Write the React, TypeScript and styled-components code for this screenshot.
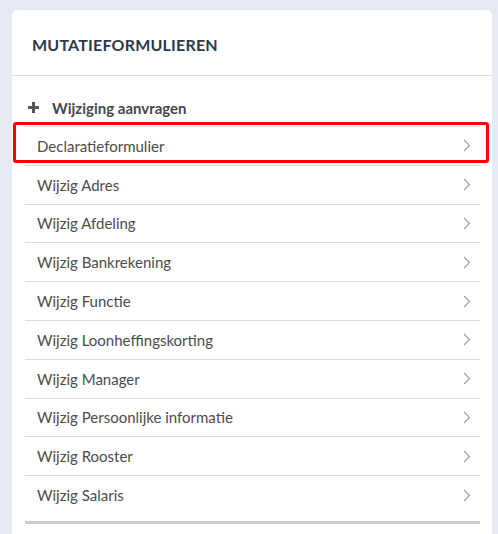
import React from "react";
import styled, { createGlobalStyle } from "styled-components";

const Global = createGlobalStyle`
  html, body { margin: 0; padding: 0; background: #e6ebf3; }
  body { font-family: "Source Sans Pro", Lato, "Noto Sans", sans-serif; }
  * { box-sizing: border-box; }
`;

const Page = styled.div`
  padding: 10px 6px 0 12px;
  height: 534px;
  overflow: hidden;
`;

const Card = styled.div`
  background: #ffffff;
  border-radius: 6px;
  height: 560px;
`;

const Header = styled.div`
  height: 66px;
  display: flex;
  align-items: center;
  padding: 3px 20px 0;
  border-bottom: 1px solid #e2e2e2;
`;

const Title = styled.h2`
  margin: 0;
  font-size: 16px;
  font-weight: 700;
  color: #2b3a4a;
  letter-spacing: 0.2px;
`;

const Body = styled.div`
  padding: 0 12px 0 13px;
`;

const Action = styled.div`
  height: 50px;
  display: flex;
  align-items: center;
  gap: 13px;
  padding: 13px 0 0 3px;
  font-size: 15px;
  font-weight: 700;
  color: #474747;
`;

const List = styled.ul`
  list-style: none;
  margin: 0;
  padding: 0 0 7px;
  border-bottom: 3px solid #cccccc;
`;

const Item = styled.li`
  position: relative;
  height: 38.8px;
  display: flex;
  align-items: center;
  justify-content: space-between;
  padding: 0 9px 0 12px;
  border-top: 1px solid #dddddd;
  font-size: 15px;
  color: #4c4c4c;
`;

const Highlight = styled.span`
  position: absolute;
  left: -12px;
  right: -9px;
  top: -5px;
  bottom: 2px;
  border: 3px solid #ff0000;
  border-radius: 3px;
  pointer-events: none;
`;

const Plus = () => (
  <svg width="11" height="11" viewBox="0 0 11 11">
    <path d="M4 0h3v4h4v3H7v4H4V7H0V4h4z" fill="#555555" />
  </svg>
);

const Chevron = () => (
  <svg width="8" height="13" viewBox="0 0 8 13">
    <path d="M1 1l5.5 5.5L1 12" fill="none" stroke="#9a9a9a" strokeWidth="1.1" />
  </svg>
);

const items = [
  "Declaratieformulier",
  "Wijzig Adres",
  "Wijzig Afdeling",
  "Wijzig Bankrekening",
  "Wijzig Functie",
  "Wijzig Loonheffingskorting",
  "Wijzig Manager",
  "Wijzig Persoonlijke informatie",
  "Wijzig Rooster",
  "Wijzig Salaris",
];

export default function App() {
  return (
    <>
      <Global />
      <Page>
        <Card>
          <Header>
            <Title>MUTATIEFORMULIEREN</Title>
          </Header>
          <Body>
            <Action>
              <Plus />
              Wijziging aanvragen
            </Action>
            <List>
              {items.map((label, i) => (
                <Item key={label}>
                  {i === 0 && <Highlight />}
                  <span>{label}</span>
                  <Chevron />
                </Item>
              ))}
            </List>
          </Body>
        </Card>
      </Page>
    </>
  );
}
